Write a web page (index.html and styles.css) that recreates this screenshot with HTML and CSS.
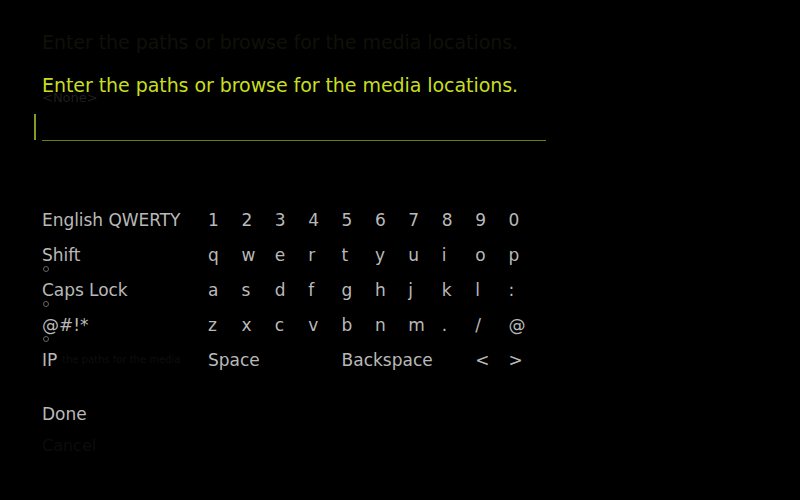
FILE: index.html
```html
<!DOCTYPE html>
<html>
<head>
<meta charset="utf-8">
<link rel="stylesheet" href="styles.css">
</head>
<body>
<div class="screen">
  <div class="ghost ghost-title">Enter the paths or browse for the media locations.</div>
  <div class="ghost ghost-none">&lt;None&gt;</div>
  <div class="ghost ghost-ip">the paths for the media</div>
  <div class="ghost ghost-cancel">Cancel</div>

  <div class="heading">Enter the paths or browse for the media locations.</div>
  <div class="input">
    <span class="cursor"></span>
    <span class="underline"></span>
  </div>

  <div class="keyboard">
    <div class="row">
      <div class="label">English QWERTY</div>
      <div class="keys">
        <span>1</span><span>2</span><span>3</span><span>4</span><span>5</span><span>6</span><span>7</span><span>8</span><span>9</span><span>0</span>
      </div>
    </div>
    <div class="row">
      <div class="label radio">Shift</div>
      <div class="keys">
        <span>q</span><span>w</span><span>e</span><span>r</span><span>t</span><span>y</span><span>u</span><span>i</span><span>o</span><span>p</span>
      </div>
    </div>
    <div class="row">
      <div class="label radio">Caps Lock</div>
      <div class="keys">
        <span>a</span><span>s</span><span>d</span><span>f</span><span>g</span><span>h</span><span>j</span><span>k</span><span>l</span><span>:</span>
      </div>
    </div>
    <div class="row">
      <div class="label radio">@#!*</div>
      <div class="keys">
        <span>z</span><span>x</span><span>c</span><span>v</span><span>b</span><span>n</span><span>m</span><span>.</span><span>/</span><span>@</span>
      </div>
    </div>
    <div class="row">
      <div class="label">IP</div>
      <div class="keys">
        <span class="wide">Space</span><span class="wide">Backspace</span><span>&lt;</span><span>&gt;</span>
      </div>
    </div>
  </div>

  <div class="done">Done</div>
</div>
</body>
</html>
```
FILE: styles.css
```css
html, body {
  margin: 0;
  padding: 0;
  background: #000;
}
body {
  width: 800px;
  height: 500px;
  overflow: hidden;
  font-family: "DejaVu Sans", "Noto Sans", sans-serif;
}
.screen {
  position: relative;
  width: 800px;
  height: 500px;
  padding: 72px 0 0 42px;
  box-sizing: border-box;
}
.ghost {
  position: absolute;
  left: 42px;
  white-space: nowrap;
}
.ghost-title {
  top: 31px;
  font-size: 19px;
  letter-spacing: -0.06px;
  color: #101008;
}
.ghost-none {
  top: 90px;
  font-size: 13px;
  color: #1e1e1e;
}
.ghost-ip {
  top: 354px;
  left: 62px;
  font-size: 10px;
  color: #0e0e0e;
}
.ghost-cancel {
  top: 436px;
  font-size: 16px;
  color: #0c0c0c;
}
.heading {
  position: relative;
  font-size: 19px;
  letter-spacing: -0.06px;
  line-height: 26px;
  color: #c8df1e;
  white-space: nowrap;
}
.input {
  position: relative;
  height: 44px;
  width: 504px;
}
.cursor {
  position: absolute;
  left: -8px;
  top: 16px;
  width: 2px;
  height: 26px;
  background: #8a9a1e;
}
.underline {
  position: absolute;
  left: 0;
  right: 0;
  bottom: 1px;
  height: 1px;
  background: #6b7a18;
}
.keyboard {
  margin-top: 60px;
  display: flex;
  flex-direction: column;
}
.row {
  display: flex;
  height: 35px;
  align-items: center;
  font-size: 17px;
  color: #b9b9b9;
}
.label {
  position: relative;
  width: 165px;
  flex: none;
  white-space: nowrap;
  letter-spacing: -0.05px;
}
.radio::after {
  content: "";
  position: absolute;
  left: 1px;
  bottom: -7px;
  width: 4px;
  height: 4px;
  border: 1px solid #666;
  border-radius: 50%;
}
.keys {
  display: grid;
  grid-template-columns: repeat(10, 33.4px);
}
.keys span {
  padding-left: 1px;
}
.keys .wide {
  grid-column: span 4;
}
.done {
  margin-top: 27px;
  font-size: 17px;
  color: #b9b9b9;
}
```
